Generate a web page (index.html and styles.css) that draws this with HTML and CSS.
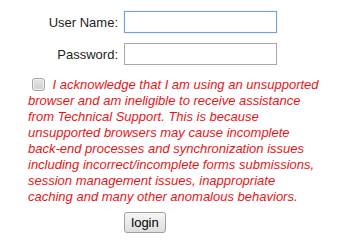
FILE: index.html
```html
<!DOCTYPE html>
<html>
<head>
  <meta name="viewport" content="width=device-width, initial-scale=1.0">
  <title>Login</title>
  <link rel="stylesheet" href="styles.css">
</head>
<body>
  <form class="login-form" onsubmit="return false;">
    <div class="fields">
      <label class="field-label" for="userName">User Name:</label>
      <input type="text" id="userName" class="field-input focused">
      <label class="field-label" for="password">Password:</label>
      <input type="password" id="password" class="field-input">
    </div>
    <p class="notice">
      <input type="checkbox" id="acknowledge" class="notice-check">
      I acknowledge that I am using an unsupported browser and am ineligible to receive assistance from Technical Support. This is because unsupported browsers may cause incomplete back-end processes and synchronization issues including incorrect/incomplete forms submissions, session management issues, inappropriate caching and many other anomalous behaviors.
    </p>
    <div class="actions">
      <button type="submit" class="login-button">login</button>
    </div>
  </form>
</body>
</html>
```

FILE: styles.css
```css
body {
  font-family: "Liberation Sans", Arial, sans-serif;
  font-size: 13px;
  background-color: #fff;
  color: #000;
  margin: 0;
}

.login-form {
  padding-top: 11px;
}

.fields {
  display: grid;
  grid-template-columns: 118px 153px;
  grid-auto-rows: 22px;
  column-gap: 6px;
  row-gap: 10px;
  align-items: center;
}

.field-label {
  text-align: right;
  font-size: 13px;
  color: #222;
}

.field-input {
  box-sizing: border-box;
  height: 22px;
  width: 153px;
  margin: 0;
  padding: 2px 4px;
  border: 1px solid #a9a9a9;
  font-family: inherit;
  font-size: 13px;
  outline: none;
}

.field-input.focused {
  border: 1px solid #7b9ed4;
  box-shadow: inset 0 0 1px #a8c0e6, 0 0 1px #a8c0e6;
}

.notice {
  margin: 12px 0 0 0;
  padding-left: 28px;
  width: 291px;
  font-style: italic;
  line-height: 16px;
  color: #e4161a;
}

.notice-check {
  appearance: none;
  -webkit-appearance: none;
  box-sizing: border-box;
  width: 13px;
  height: 13px;
  margin: 0 4px 0 4px;
  vertical-align: -2px;
  border: 1px solid #a6a6a6;
  border-radius: 3px;
  background: linear-gradient(#e6e6e6, #cfcfcf);
  box-shadow: inset 0 0 0 1px #f2f2f2;
}

.actions {
  margin-top: 7px;
  padding-left: 124px;
}

.login-button {
  box-sizing: border-box;
  width: 42px;
  height: 21px;
  padding: 0;
  font-family: inherit;
  font-size: 13px;
  color: #000;
  background: linear-gradient(#f6f6f6, #dedede);
  border: 1px solid #a0a0a0;
  border-radius: 3px;
}
```
